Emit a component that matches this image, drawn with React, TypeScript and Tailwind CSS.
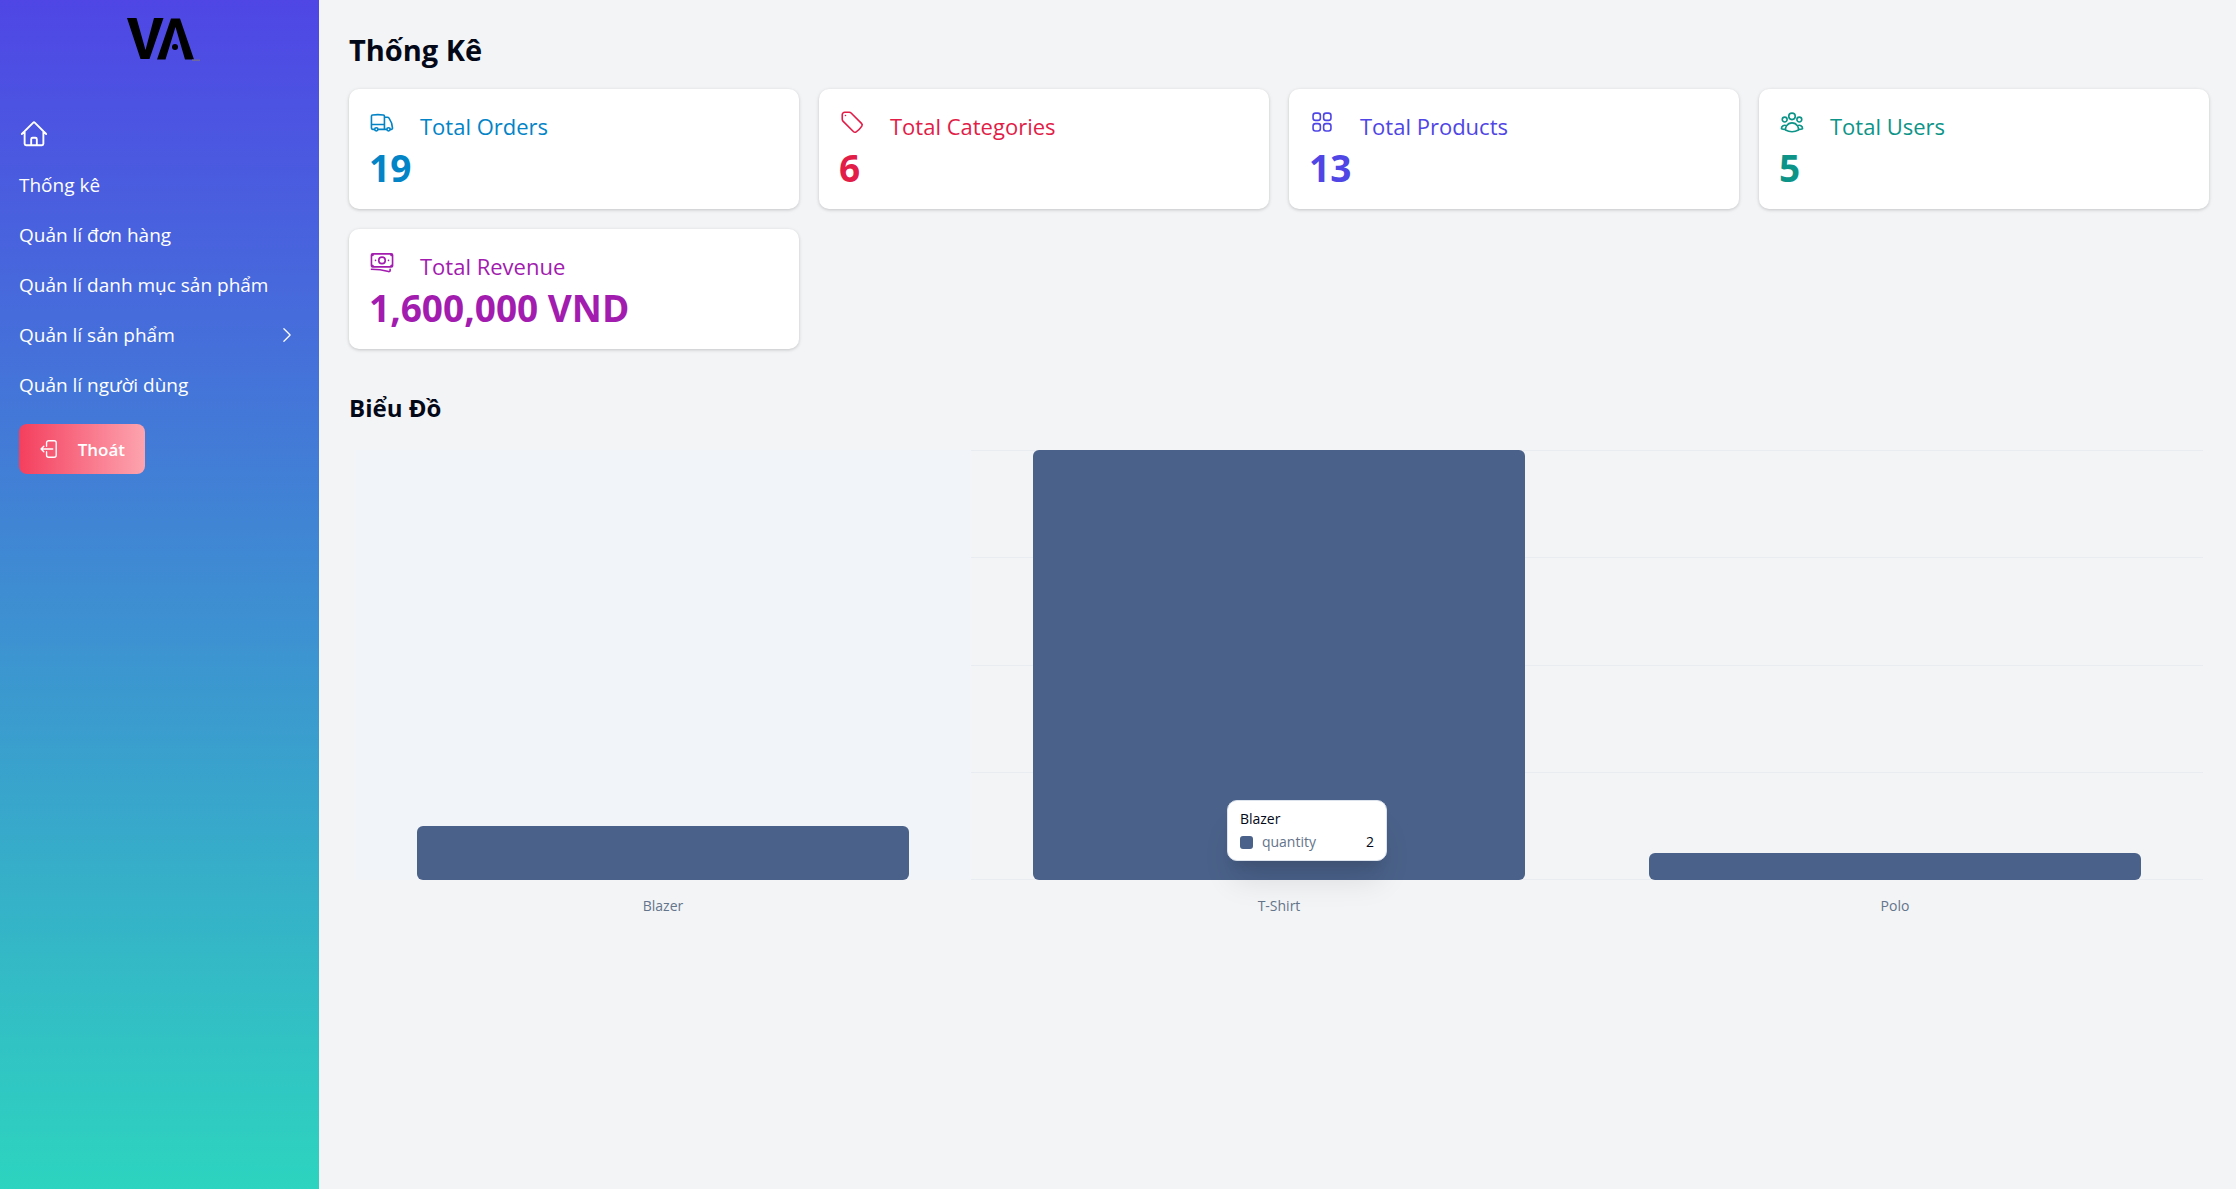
import type { ComponentType } from "react";
import {
  HiOutlineHome,
  HiOutlineTruck,
  HiOutlineTag,
  HiOutlineSquares2X2,
  HiOutlineUserGroup,
  HiOutlineBanknotes,
  HiOutlineChevronRight,
} from "react-icons/hi2";

type Stat = {
  title: string;
  value: string;
  color: string;
  Icon: ComponentType<{ className?: string }>;
};

const stats: Stat[] = [
  { title: "Total Orders", value: "19", color: "text-[#0284c7]", Icon: HiOutlineTruck },
  { title: "Total Categories", value: "6", color: "text-[#e11d48]", Icon: HiOutlineTag },
  { title: "Total Products", value: "13", color: "text-[#4f46e5]", Icon: HiOutlineSquares2X2 },
  { title: "Total Users", value: "5", color: "text-[#0d9488]", Icon: HiOutlineUserGroup },
  { title: "Total Revenue", value: "1,600,000 VND", color: "text-[#a21caf]", Icon: HiOutlineBanknotes },
];

const sales = [
  { name: "Blazer", quantity: 2 },
  { name: "T-Shirt", quantity: 16 },
  { name: "Polo", quantity: 1 },
];
const maxQuantity = 16;

function Logo() {
  return (
    <svg viewBox="0 0 76 46" className="h-[46px] w-[76px]" role="img" aria-label="VA">
      <path d="M1 1H10.500L19.500 33L28 1H37.500L23.500 42H14.500Z" />
      <path d="M31 42.500L45 1.500H54L68 42.500H59L49.500 10L39.500 42.500Z" />
      <circle cx="49" cy="30" r="3" />
      <path d="M66 43.200h8" stroke="#6f6b9c" strokeWidth="1.500" />
    </svg>
  );
}

function LogoutIcon() {
  return (
    <svg
      viewBox="0 0 24 24"
      className="size-[22px]"
      fill="none"
      stroke="currentColor"
      strokeWidth="1.5"
      strokeLinecap="round"
      strokeLinejoin="round"
      aria-hidden="true"
    >
      <path d="M8.25 9V5.25A2.25 2.25 0 0 1 10.5 3h6a2.25 2.25 0 0 1 2.25 2.25v13.5A2.25 2.25 0 0 1 16.5 21h-6a2.25 2.25 0 0 1-2.25-2.25V15m-3 0-3-3m0 0 3-3m-3 3H15" />
    </svg>
  );
}

function Sidebar() {
  return (
    <aside className="flex w-[319px] shrink-0 flex-col bg-linear-to-b/srgb from-[#4f46e5] to-[#2dd4bf] px-[19px] text-white">
      <div className="flex h-[84px] justify-center pt-[17px] pl-2">
        <Logo />
      </div>
      <nav className="flex flex-col items-start text-[19px]">
        <a href="#home" aria-label="Home" className="flex h-[76px] items-center pt-6">
          <HiOutlineHome className="size-[30px]" />
        </a>
        <a href="#stats" className="flex h-[50px] items-center">Thống kê</a>
        <a href="#orders" className="flex h-[50px] items-center">Quản lí đơn hàng</a>
        <a href="#categories" className="flex h-[50px] items-center">Quản lí danh mục sản phẩm</a>
        <button type="button" className="flex h-[50px] w-full items-center justify-between pr-[3px]">
          Quản lí sản phẩm
          <HiOutlineChevronRight className="size-5" />
        </button>
        <a href="#users" className="flex h-[50px] items-center">Quản lí người dùng</a>
      </nav>
      <button
        type="button"
        className="mt-[14px] flex h-[50px] w-[126px] items-center justify-between rounded-lg bg-linear-to-r/srgb from-[#f43f5e] to-[#fda4af] px-5 text-[17px] font-semibold"
      >
        <LogoutIcon />
        <span className="pt-[2px]">Thoát</span>
      </button>
    </aside>
  );
}

function StatCard({ title, value, color, Icon }: Stat) {
  return (
    <div className="h-[120px] rounded-[10px] bg-white p-5 shadow-[0_1px_4px_rgba(0,0,0,0.1),0_1px_3px_rgba(0,0,0,0.1)]">
      <div className={color}>
        <div className="flex items-start gap-[25px]">
          <Icon className="size-[26px]" />
          <h3 className="pt-[3px] text-[22px] leading-[28px] font-medium">{title}</h3>
        </div>
        <p className="mt-2 text-[37px] leading-[40px] font-bold">{value}</p>
      </div>
    </div>
  );
}

function Tooltip() {
  return (
    <div className="absolute top-[350px] left-[47.200%] w-40 rounded-[10px] border border-[#dde3ec] bg-white px-3 py-2 text-[14px] leading-5 shadow-[0_25px_31px_-6px_rgba(0,0,0,0.1),0_10px_12px_-7px_rgba(0,0,0,0.1)]">
      <div className="font-medium text-[#020817]">Blazer</div>
      <div className="mt-[3px] flex items-center gap-[9px]">
        <span className="size-[13px] rounded-[3px] bg-[#4a6189]" />
        <span className="flex-1 text-[#64748b]">quantity</span>
        <span className="font-medium text-[#020817]">2</span>
      </div>
    </div>
  );
}

function Chart() {
  return (
    <div className="relative px-[6px]">
      <div className="relative h-[430px]">
        <div className="absolute inset-0 flex flex-col justify-between">
          {[16, 12, 8, 4, 0].map((tick) => (
            <div key={tick} className="h-px bg-[#e9ecf1]" />
          ))}
        </div>
        <div className="relative grid h-full grid-cols-3">
          {sales.map((s, i) => (
            <div
              key={s.name}
              className={i === 0 ? "flex items-end justify-center bg-[#f1f5f9]" : "flex items-end justify-center"}
            >
              <div
                className="w-4/5 rounded-[6px] bg-[#4a6189]"
                style={{ height: `${(s.quantity / maxQuantity) * 100}%` }}
              />
            </div>
          ))}
        </div>
      </div>
      <div className="mt-4 grid grid-cols-3 text-center text-[14px] leading-5 text-[#64748b]">
        {sales.map((s) => (
          <span key={s.name}>{s.name}</span>
        ))}
      </div>
      <Tooltip />
    </div>
  );
}

export default function App() {
  return (
    <div className="flex min-h-screen bg-[#f3f4f6] font-['Open_Sans','Noto_Sans',sans-serif] text-[#020817]">
      <Sidebar />
      <main className="min-w-0 flex-1 pt-[30px] pr-[27px] pl-[30px]">
        <h1 className="text-[29px] leading-[40px] font-bold">Thống Kê</h1>
        <div className="mt-[19px] grid grid-cols-4 gap-5">
          {stats.map((s) => (
            <StatCard key={s.title} {...s} />
          ))}
        </div>
        <h2 className="mt-[39px] mb-[22px] text-[24px] leading-[40px] font-bold">Biểu Đồ</h2>
        <Chart />
      </main>
    </div>
  );
}
